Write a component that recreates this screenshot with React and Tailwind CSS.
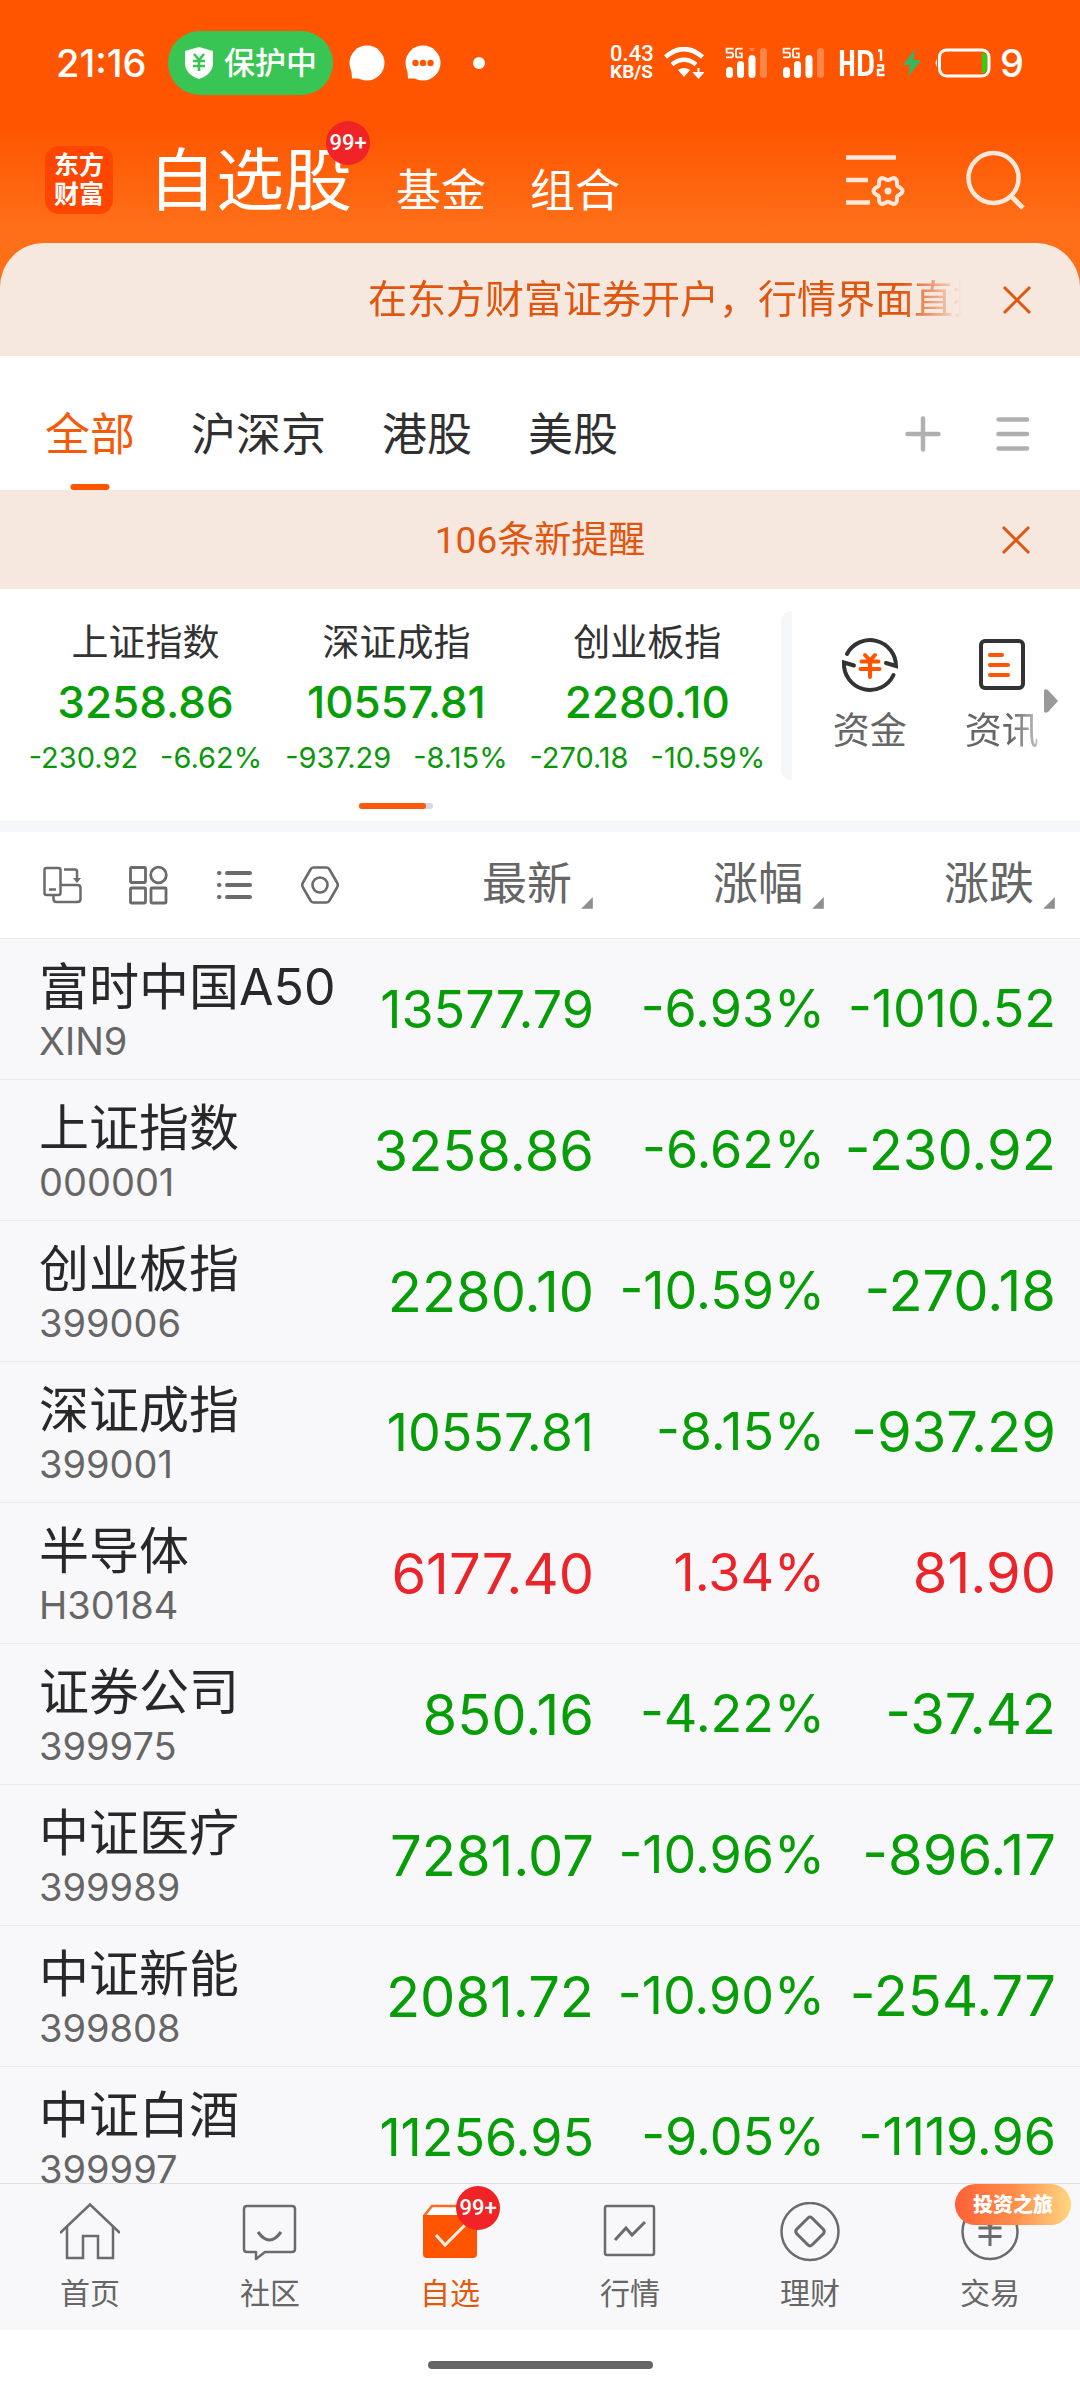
import React from "react";

const INDICES = [
  { name: "上证指数", value: "3258.86", diff: "-230.92", pct: "-6.62%" },
  { name: "深证成指", value: "10557.81", diff: "-937.29", pct: "-8.15%" },
  { name: "创业板指", value: "2280.10", diff: "-270.18", pct: "-10.59%" },
];

const ROWS = [
  ["富时中国A50", "XIN9", "13577.79", "-6.93%", "-1010.52"],
  ["上证指数", "000001", "3258.86", "-6.62%", "-230.92"],
  ["创业板指", "399006", "2280.10", "-10.59%", "-270.18"],
  ["深证成指", "399001", "10557.81", "-8.15%", "-937.29"],
  ["半导体", "H30184", "6177.40", "1.34%", "81.90"],
  ["证券公司", "399975", "850.16", "-4.22%", "-37.42"],
  ["中证医疗", "399989", "7281.07", "-10.96%", "-896.17"],
  ["中证新能", "399808", "2081.72", "-10.90%", "-254.77"],
  ["中证白酒", "399997", "11256.95", "-9.05%", "-1119.96"],
];

const gearPoints = Array.from({ length: 72 }, (_, i) => {
  const a = (i / 72) * Math.PI * 2;
  const r = 12.6 + 1.9 * Math.cos(6 * a);
  return `${(42 + r * Math.cos(a)).toFixed(2)},${(38 + r * Math.sin(a)).toFixed(2)}`;
}).join(" ");

function Signal({ notch }) {
  return (
    <svg width="42" height="32" viewBox="0 0 42 32" fill="#fff" aria-hidden="true">
      <path d="M8.5 1.6H1.6V5.6H6.4Q8 5.6 8 7.4V8.6Q8 10.4 6.4 10.4H1" fill="none" stroke="#fff" strokeWidth="1.8" />
      <path d="M17.5 1.6H13Q11 1.6 11 3.6V8.4Q11 10.4 13 10.4H16.8V6.4H14" fill="none" stroke="#fff" strokeWidth="1.8" />
      <rect x="1" y="20" width="7" height="11" rx="3.5" />
      <rect x="12" y="14" width="7" height="17" rx="3.5" />
      <rect x="23.500" y="8" width="7" height="23" rx="3.5" />
      <rect x="35" y="1" width="7" height="30" rx="3.5" opacity="0.28" />
      {notch && <path d="M23.500 1h7l-3.500 4z" opacity="0.28" />}
    </svg>
  );
}

function StatusBar() {
  return (
    <div className="flex h-[126px] items-center justify-between pl-[56px] pr-[56px] text-white">
      <div className="flex items-center">
        <span className="w-[112px] font-[Inter] text-[38px] font-medium leading-[44px]">21:16</span>
        <div className="flex h-[64px] w-[165px] items-center gap-[10px] rounded-full bg-[#38c553] pl-[16px]">
          <svg width="30" height="34" viewBox="0 0 30 34" aria-hidden="true">
            <path d="M15 1 29 5V17Q29 28 15 33 1 28 1 17V5Z" fill="#fff" />
            <path d="M10 8l5 6 5-6M9 15h12M9 20h12M15 14v11" fill="none" stroke="#38c553" strokeWidth="2.6" />
          </svg>
          <span className="pt-[2px] text-[31px] font-medium leading-[40px]">保护中</span>
        </div>
        <svg className="ml-[16px]" width="36" height="37" viewBox="0 0 36 37" fill="#fff" aria-hidden="true">
          <circle cx="18" cy="18" r="17.500" />
          <path d="M2 20 3 33.500H18z" />
        </svg>
        <svg className="ml-[20px]" width="36" height="37" viewBox="0 0 36 37" fill="#fff" aria-hidden="true">
          <circle cx="18" cy="18" r="17.500" />
          <path d="M2 20 3 33.500H18z" />
          <g fill="#ff5500">
            <circle cx="10.500" cy="18" r="3.200" />
            <circle cx="18" cy="18" r="3.200" />
            <circle cx="25.500" cy="18" r="3.200" />
          </g>
        </svg>
        <span className="ml-[32px] h-[12px] w-[12px] rounded-full bg-white" />
      </div>
      <div className="flex items-center">
        <div className="w-[54px] text-[22px] font-medium leading-[18px]">
          <div>0.43</div>
          <div className="text-[19px] font-bold leading-[18px]">KB/S</div>
        </div>
        <svg width="40" height="32" viewBox="0 0 40 32" fill="none" stroke="#fff" aria-hidden="true">
          <path d="M1.500 10Q20-6 38.500 10" strokeWidth="4.600" />
          <path d="M8 17.500Q20 8 32 17.500" strokeWidth="4.600" />
          <path d="M14 23Q20 19 26 23L20 30Z" fill="#fff" stroke="none" />
          <path d="M34.500 21v6M30.500 26h8l-4 4.500z" fill="#fff" strokeWidth="2" />
        </svg>
        <span className="ml-[21px] flex gap-[15px]">
          <Signal notch />
          <Signal />
        </span>
        <svg className="ml-[15px]" width="47" height="30" viewBox="0 0 47 30" fill="none" stroke="#fff" aria-hidden="true">
          <path d="M3 2V28M13 2V28M3 15H13" strokeWidth="4.200" />
          <path d="M21 4H25Q32.500 4 32.500 11V19Q32.500 26 25 26H21Z" strokeWidth="4.200" />
          <path d="M39 2.500H42V13M38 17.500H44V22H39V27H45.500" strokeWidth="2.400" />
        </svg>
        <svg className="ml-[17px]" width="18" height="28" viewBox="0 0 18 28" fill="#34b765" aria-hidden="true">
          <path d="M12 0 0 16H7L5 28 18 11H10.500Z" />
        </svg>
        <svg className="ml-[13px]" width="57" height="30" viewBox="0 0 57 30" aria-hidden="true">
          <path d="M3 11Q0 15 3 19Z" fill="#fff" />
          <rect x="5.500" y="2" width="49.500" height="26" rx="7" fill="none" stroke="#fff" strokeWidth="3" />
          <path d="M48 5q5 0 5 5v10q0 5-5 5z" fill="#2bd213" />
        </svg>
        <span className="ml-[9px] font-[Inter] text-[38px] font-medium leading-[44px]">9</span>
      </div>
    </div>
  );
}

function CountBadge({ className }) {
  return (
    <span className={"absolute flex h-[44px] w-[44px] items-center justify-center rounded-full bg-[#f02426] text-[22px] font-medium leading-none text-white " + className}>
      99+
    </span>
  );
}

function TitleBar() {
  return (
    <div className="flex items-center pb-[27px] pl-[45px] pr-[54px] pt-[17px] text-white">
      <div className="flex h-[68px] w-[68px] flex-col items-center justify-center rounded-[14px] bg-[#ff4600] text-[25px] font-bold leading-[29px]">
        <span>东方</span>
        <span>财富</span>
      </div>
      <nav className="ml-[35px] flex items-center gap-[44px]">
        <button type="button" className="relative pt-[4px] text-[68px] leading-[68px]">
          自选股
          <CountBadge className="-right-[18px] -top-[23px]" />
        </button>
        <button type="button" className="pt-[25px] text-[45px] leading-[48px]">基金</button>
        <button type="button" className="pt-[25px] text-[45px] leading-[48px]">组合</button>
      </nav>
      <div className="ml-auto flex items-center gap-[60px]">
        <button type="button" aria-label="列表设置">
          <svg width="60" height="54" viewBox="0 0 60 54" fill="none" stroke="#ffe7d9" strokeWidth="4.500">
            <path d="M0 4.500H50M0 27H22M0 49.500H24" />
            <polygon points={gearPoints} strokeWidth="4" strokeLinejoin="round" />
            <circle cx="42" cy="38" r="3.500" fill="#ffe7d9" stroke="none" />
          </svg>
        </button>
        <button type="button" aria-label="搜索">
          <svg width="60" height="60" viewBox="0 0 60 60" fill="none" stroke="#ffe7d9" strokeWidth="4.500">
            <circle cx="27.500" cy="28" r="25" />
            <path d="M45 46 57 58" strokeWidth="5" />
          </svg>
        </button>
      </div>
    </div>
  );
}

function CloseButton() {
  return (
    <button type="button" aria-label="关闭" className="ml-auto shrink-0">
      <svg width="30" height="30" viewBox="0 0 30 30" fill="none" stroke="#e0560f" strokeWidth="3">
        <path d="M2 2 28 28M28 2 2 28" />
      </svg>
    </button>
  );
}

function MarketTabs() {
  return (
    <div className="flex h-[134px] items-stretch bg-white pl-[45px] pr-[50px]">
      <nav className="flex gap-[56px] text-[45px] leading-[60px] text-[#303030]">
        <button type="button" className="relative pt-[26px] text-[#f55a0a]">
          全部
          <span className="absolute bottom-0 left-1/2 h-[6px] w-[39px] -translate-x-1/2 rounded-full bg-[#ff5500]" />
        </button>
        <button type="button" className="pt-[26px]">沪深京</button>
        <button type="button" className="pt-[26px]">港股</button>
        <button type="button" className="pt-[26px]">美股</button>
      </nav>
      <div className="ml-auto flex items-center gap-[55px] pt-[22px]">
        <button type="button" aria-label="添加">
          <svg width="36" height="36" viewBox="0 0 36 36" stroke="#b0b0b0" strokeWidth="4.500" strokeLinecap="round">
            <path d="M18 2.500V33.500M2.500 18H33.500" />
          </svg>
        </button>
        <button type="button" aria-label="菜单">
          <svg width="34" height="36" viewBox="0 0 34 36" stroke="#b0b0b0" strokeWidth="4.500" strokeLinecap="round">
            <path d="M2.500 3.500H31M2.500 18H31M2.500 32.500H31" />
          </svg>
        </button>
      </div>
    </div>
  );
}

function IndexPanel() {
  return (
    <section className="flex bg-white pb-[12px] pt-[22px]">
      <div className="flex w-[72.300%] shrink-0 flex-col pl-[20px] pr-[8px]">
        <div className="grid grid-cols-3 pt-[9px]">
          {INDICES.map((it) => (
            <button type="button" key={it.name} className="flex flex-col items-center">
              <span className="text-[37px] leading-[48px] text-[#333]">{it.name}</span>
              <span className="mt-[8px] font-[Inter] text-[44px] font-medium leading-[52px] text-[#069d06]">{it.value}</span>
              <span className="mt-[12px] flex justify-center gap-[22px] font-[Inter] text-[29px] leading-[36px] text-[#0a980a]">
                <span>{it.diff}</span>
                <span>{it.pct}</span>
              </span>
            </button>
          ))}
        </div>
        <div className="mx-auto mt-[27px] h-[6px] w-[74px] rounded-full bg-[#d5d8dd]">
          <div className="h-full w-[67px] rounded-full bg-[#fb5a0c]" />
        </div>
      </div>
      <div className="flex min-w-0 flex-1 items-start">
        <div className="h-[169px] w-[11px] shrink-0 rounded-l-[11px] bg-[#f6f7fa]" />
        <div className="flex flex-1 items-center pl-[41px] pt-[23px]">
          <button type="button" className="flex flex-col items-center">
            <svg width="60" height="60" viewBox="0 0 60 60" fill="none" strokeLinecap="round" aria-hidden="true">
              <g stroke="#333" strokeWidth="4">
                <path d="M7 20A26 26 0 0 1 56 32L46 29" />
                <path d="M53.500 41A26 26 0 0 1 4 28.500L14 31.500" />
              </g>
              <path d="M25 21 30 26.500 35 21M21.500 27.500H38.500M20.500 35H39.500M30 27V43" stroke="#ff5500" strokeWidth="4" />
            </svg>
            <span className="mt-[14px] text-[37px] leading-[48px] text-[#666]">资金</span>
          </button>
          <button type="button" className="ml-[58px] flex flex-col items-center">
            <svg width="60" height="60" viewBox="0 0 60 60" fill="none" strokeLinecap="round" aria-hidden="true">
              <rect x="9" y="7" width="42" height="47" rx="4" stroke="#333" strokeWidth="4" />
              <path d="M18 21H30M18 31H36M18 41H36" stroke="#ff5500" strokeWidth="4" />
            </svg>
            <span className="mt-[14px] text-[37px] leading-[48px] text-[#666] [mask-image:linear-gradient(to_right,black_60%,rgba(0,0,0,0.4))]">资讯</span>
          </button>
          <svg className="ml-[5px] mt-[12px] shrink-0" width="14" height="26" viewBox="0 0 14 26" fill="#999" aria-hidden="true">
            <path d="M0 3Q0 0 4 2L14 13 4 24Q0 26 0 23Z" />
          </svg>
        </div>
      </div>
    </section>
  );
}

function Toolbar() {
  return (
    <div className="flex items-center gap-[46px] pl-[42px] text-[#6b6b6b]">
      <button type="button" aria-label="横屏">
        <svg width="40" height="40" viewBox="0 0 40 40" fill="none" stroke="currentColor" strokeWidth="2.500">
          <rect x="2.500" y="3" width="16" height="27" rx="2" />
          <path d="M7 24.500H14" />
          <path d="M11.500 30V34Q11.500 37 14.500 37H35.500Q38.500 37 38.500 34V23Q38.500 20 35.500 20H19" />
          <path d="M22 4.500H33Q35 4.500 35 6.500V14" />
          <path d="M31 13H39L35 18Z" fill="currentColor" stroke="none" />
        </svg>
      </button>
      <button type="button" aria-label="宫格">
        <svg width="40" height="40" viewBox="0 0 40 40" fill="none" stroke="currentColor" strokeWidth="2.800">
          <rect x="2.500" y="2.500" width="15" height="15" rx="1" />
          <circle cx="30.500" cy="10" r="7.800" />
          <rect x="2.500" y="23" width="15" height="15" rx="1" />
          <rect x="23" y="23" width="15" height="15" rx="1" />
        </svg>
      </button>
      <button type="button" aria-label="列表">
        <svg width="40" height="40" viewBox="0 0 40 40" stroke="currentColor" strokeWidth="4" strokeLinecap="round">
          <path d="M5 8H5.500M5 20H5.500M5 32H5.500M13 8H36M13 20H36M13 32H36" />
        </svg>
      </button>
      <button type="button" aria-label="设置">
        <svg width="40" height="40" viewBox="0 0 40 40" fill="none" stroke="currentColor" strokeWidth="2.600" strokeLinejoin="round">
          <path d="M13.500 2.500H26.500Q28.500 2.500 29.500 4.500L37 17.500Q38.500 20 37 22.500L29.500 35.500Q28.500 37.500 26.500 37.500H13.500Q11.500 37.500 10.500 35.500L3 22.500Q1.500 20 3 17.500L10.500 4.500Q11.500 2.500 13.500 2.500Z" />
          <circle cx="20" cy="20" r="7.500" />
        </svg>
      </button>
    </div>
  );
}

function SortHeader({ label }) {
  return (
    <button type="button" className="inline-flex items-center gap-[8px] text-[45px] font-normal leading-[60px] text-[#666]">
      {label}
      <svg className="self-end pb-[3px]" width="14" height="18" viewBox="0 0 14 18" fill="#8e8e93" aria-hidden="true">
        <path d="M14 0V14H0Z" />
      </svg>
    </button>
  );
}

function QuoteTable() {
  return (
    <div className="min-h-0 flex-1 overflow-hidden bg-[#f8f8fb]">
      <table className="w-full table-fixed border-collapse">
        <colgroup>
          <col className="w-[55%]" />
          <col className="w-[21.400%]" />
          <col />
        </colgroup>
        <thead>
          <tr className="h-[106px] border-b border-[#ececee] bg-white">
            <th className="p-0">
              <div className="flex items-center justify-between">
                <Toolbar />
                <SortHeader label="最新" />
              </div>
            </th>
            <th className="p-0 text-right"><SortHeader label="涨幅" /></th>
            <th className="p-0 pr-[24px] text-right"><SortHeader label="涨跌" /></th>
          </tr>
        </thead>
        <tbody>
          {ROWS.map(([name, code, last, pct, diff]) => {
            const color = pct.startsWith("-") ? "text-[#069d06]" : "text-[#ea2428]";
            return (
              <tr key={code} className={"border-b border-[#ebebed] text-right font-[Inter,'Noto_Sans_CJK_SC',sans-serif] text-[52px] leading-[64px] " + color}>
                <td className="p-0 pb-[15px] pl-[39px] pt-[17px]">
                  <div className="flex items-center justify-between">
                    <div className="text-left">
                      <div className="text-[50px] leading-[62px] text-[#282828]">{name}</div>
                      <div className="text-[38px] leading-[46px] text-[#666]">{code}</div>
                    </div>
                    <span className={last.length > 7 ? "text-[52px]" : "text-[56px]"}>{last}</span>
                  </div>
                </td>
                <td className="p-0">{pct}</td>
                <td className={"p-0 pr-[24px] " + (diff.length > 7 ? "text-[52px]" : "text-[56px]")}>{diff}</td>
              </tr>
            );
          })}
        </tbody>
      </table>
    </div>
  );
}

const NAV = [
  {
    label: "首页",
    icon: (
      <>
        <path d="M0 31 30 2.500 60 31" />
        <path d="M7 25V56H23V34H38V56H53V25" />
      </>
    ),
  },
  {
    label: "社区",
    icon: (
      <>
        <path d="M7 4H52Q55 4 55 7V47Q55 50 52 50H25L16 57V50H7Q4 50 4 47V7Q4 4 7 4Z" strokeLinejoin="round" />
        <path d="M18 30Q29.500 46 41 30" strokeWidth="3" />
      </>
    ),
  },
  {
    label: "自选",
    active: true,
    icon: (
      <>
        <path d="M4 14 12 4H48L56 14" fill="#fff" stroke="#fb6a20" />
        <path d="M3 13H57V52Q57 56 53 56H7Q3 56 3 52Z" fill="#ff5500" stroke="none" />
        <path d="M16 33 25 43 45 23" stroke="#fff0e6" strokeWidth="3" />
      </>
    ),
  },
  {
    label: "行情",
    icon: (
      <>
        <rect x="5" y="4" width="49" height="49" rx="2" />
        <path d="M15 38 26 26 32 33 45 20" strokeWidth="3" />
      </>
    ),
  },
  {
    label: "理财",
    icon: (
      <>
        <circle cx="30" cy="29.500" r="28.500" />
        <path d="M28 16Q30 14 32 16L43.500 27.500Q45 29.500 43.500 31.500L32 43Q30 45 28 43L16.500 31.500Q15 29.500 16.500 27.500Z" strokeWidth="3" />
      </>
    ),
  },
  {
    label: "交易",
    tag: "投资之旅",
    icon: (
      <>
        <circle cx="30" cy="29.500" r="27.500" />
        <path d="M20 13 30 24 40 13M18.500 26H41.500M18.500 34.500H41.500M30 24V44" strokeWidth="3" />
      </>
    ),
  },
];

function BottomNav() {
  return (
    <nav className="relative grid grid-cols-6 border-t border-[#dfdfe2] bg-[#f8f8fb] pb-[16px] pt-[18px]">
      {NAV.map((n) => (
        <button
          type="button"
          key={n.label}
          className={"relative flex flex-col items-center " + (n.active ? "text-[#e5580c]" : "text-[#666]")}
        >
          <svg width="60" height="60" viewBox="0 0 60 60" fill="none" stroke={n.active ? "#ff5500" : "#6b6b6b"} strokeWidth="2.500" aria-hidden="true">
            {n.icon}
          </svg>
          <span className="mt-[12px] text-[30px] leading-[40px]">{n.label}</span>
          {n.active && <CountBadge className="left-[96px] -top-[16px]" />}
          {n.tag && (
            <span className="absolute -top-[18px] right-[9px] flex h-[41px] w-[116px] items-center justify-center rounded-full bg-linear-to-r from-[#ff6036] via-[#ff8b4b] to-[#ffd680] text-[20px] font-black leading-none text-white">
              {n.tag}
            </span>
          )}
        </button>
      ))}
    </nav>
  );
}

export default function App() {
  return (
    <div className="flex h-screen flex-col overflow-hidden bg-white font-[Roboto,'Noto_Sans_CJK_SC',sans-serif]">
      <header className="bg-[linear-gradient(to_bottom,#ff5500_52%,#ff6f18_94%)]">
        <StatusBar />
        <TitleBar />
      </header>
      <div className="bg-[#ff6f18]">
        <div className="flex h-[113px] items-center rounded-t-[44px] bg-[#f6e7df] pl-[368px] pr-[48px] text-[39px] leading-[52px] text-[#e0560f]">
          <div className="mr-[40px] min-w-0 flex-1 overflow-hidden whitespace-nowrap [mask-image:linear-gradient(to_right,black_90%,transparent)]">
            在东方财富证券开户，行情界面直接交易
          </div>
          <CloseButton />
        </div>
      </div>
      <MarketTabs />
      <div className="flex h-[99px] items-center bg-[#f6e7df] pl-[79px] pr-[49px] text-[37px] leading-[50px] text-[#e0560f]">
        <button type="button" className="flex-1 pt-[2px] text-center">106条新提醒</button>
        <CloseButton />
      </div>
      <IndexPanel />
      <div className="h-[11px] shrink-0 bg-[#f5f7fa]" />
      <QuoteTable />
      <BottomNav />
      <div className="flex h-[70px] shrink-0 items-center justify-center bg-white">
        <div className="h-[8px] w-[225px] rounded-full bg-[#666]" />
      </div>
    </div>
  );
}
